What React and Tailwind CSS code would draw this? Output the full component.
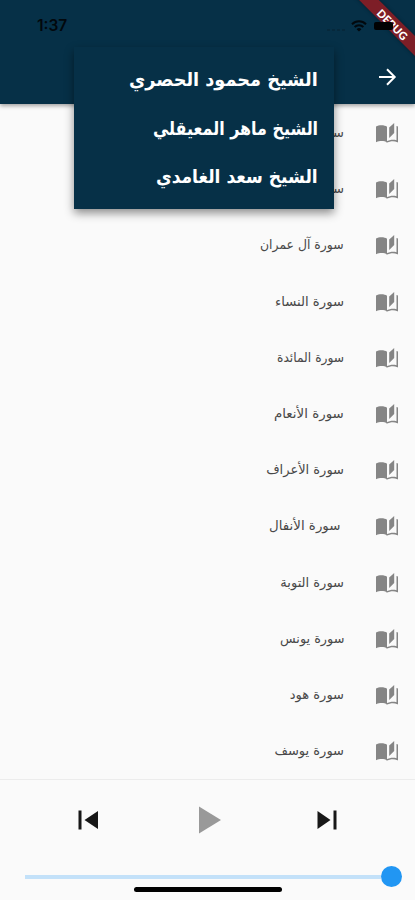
import { useLayoutEffect, useRef, useState } from "react";

const SURAHS = [
  { name: "سورة الفاتحة", width: 72 },
  { name: "سورة البقرة", width: 66 },
  { name: "سورة آل عمران", width: 84 },
  { name: "سورة النساء", width: 69 },
  { name: "سورة المائدة", width: 67 },
  { name: "سورة الأنعام", width: 70 },
  { name: "سورة الأعراف", width: 78 },
  { name: "سورة الأنفال", width: 71, inset: true },
  { name: "سورة التوبة", width: 64 },
  { name: "سورة يونس", width: 64 },
  { name: "سورة هود", width: 54 },
  { name: "سورة يوسف", width: 70 },
];

const RECITERS = [
  { name: "الشيخ محمود الحصري", width: 189 },
  { name: "الشيخ ماهر المعيقلي", width: 165 },
  { name: "الشيخ سعد الغامدي", width: 162 },
];

// Condenses a line of text from its right edge to the requested width.
function FitText({ width, className, children }) {
  const ref = useRef(null);
  const [scale, setScale] = useState(1);
  useLayoutEffect(() => {
    setScale(width / ref.current.offsetWidth);
  }, [width]);
  return (
    <span
      ref={ref}
      className={`inline-block shrink-0 origin-right whitespace-nowrap ${className}`}
      style={{ transform: `scaleX(${scale})` }}
    >
      {children}
    </span>
  );
}

function BookIcon() {
  return (
    <svg viewBox="0 0 24 24" className="mt-[2px] h-6 w-6 shrink-0 fill-[#858585]">
      <path d="M1 4.500C2.500 3.700 4.300 3.200 6.500 3.200s4.300.5 5.500 1.500V20.300c-1.300-.9-3.300-1.300-5.500-1.300-1.700 0-3.700.3-4.900 1.100-.3.200-.6 0-.6-.3Z" />
      <path d="M19.200 1v10l-5 5V5.500Z" />
      <path d="M21.500 4v14.300c-1.100-.35-2.400-.5-3.600-.5-1.700 0-4.800.65-6.300 1.500v1.500c1.500-.85 4.600-1.500 6.300-1.500 1.650 0 3.150.3 4.450 1.050.4.200.65-.1.650-.45V4.600c-.5-.25-1-.4-1.500-.6Z" />
    </svg>
  );
}

function StatusBar() {
  return (
    <div className="absolute inset-x-0 top-0 z-40 flex h-[51px] items-center justify-between pl-[37px] pr-[18px] text-[#02080d]">
      <span className="font-['Inter'] text-[15.500px] font-semibold leading-none">1:37</span>
      <div className="flex items-center">
        <div className="mr-[6px] mt-[8px] flex gap-[2px]">
          <i className="h-[2px] w-[3px] bg-[#06283b]" />
          <i className="h-[2px] w-[3px] bg-[#06283b]" />
          <i className="h-[2px] w-[3px] bg-[#06283b]" />
          <i className="h-[2px] w-[3px] bg-[#06283b]" />
        </div>
        <svg viewBox="0 0 16 12" className="mr-[7px] h-3 w-4" fill="none" stroke="currentColor">
          <path d="M1 4.200a10 10 0 0 1 14 0" strokeWidth="2" />
          <path d="M3.600 7a6.300 6.300 0 0 1 8.800 0" strokeWidth="1.900" />
          <path d="M8 11.600 5.600 9.200a3.500 3.500 0 0 1 4.800 0Z" fill="currentColor" stroke="none" />
        </svg>
        <div className="mr-[4px] h-[8px] w-[19px] rounded-[2px] bg-[#010203]" />
      </div>
    </div>
  );
}

export default function App() {
  return (
    <div className="relative flex h-[900px] w-[415px] flex-col overflow-hidden bg-[#fafafa] font-['DejaVu_Sans',sans-serif]">
      <StatusBar />
      <header className="relative z-10 h-[104px] shrink-0 bg-[#063047] pt-[51px] shadow-[0_2px_4px_rgba(0,0,0,0.35)]">
        <div className="flex h-[52px] items-center justify-end pr-[18px]">
          <svg viewBox="0 0 20 20" className="h-5 w-5" fill="none" stroke="white" strokeWidth="2">
            <path d="M2 10H17M10 2.300 17.700 10 10 17.700" />
          </svg>
        </div>
      </header>

      <ul className="flex h-[675px] shrink-0 flex-col pt-[1px]">
        {SURAHS.map((s) => (
          <li key={s.name} className="flex h-[56.200px] shrink-0 items-center justify-end pr-4">
            <div dir="rtl" className={`flex ${s.inset ? "mr-[35px]" : "mr-[31px]"}`}>
              <FitText width={s.width} className="text-[13px] leading-5 text-[#484848]">
                {s.name}
              </FitText>
            </div>
            <BookIcon />
          </li>
        ))}
      </ul>

      <footer className="flex flex-1 flex-col border-t border-[#ececec] bg-[#fafafa]">
        <div className="flex h-20 items-center justify-between px-[78px]">
          <svg viewBox="0 0 20 20" className="h-5 w-5 fill-[#171717]">
            <path d="M0.500 0.500h3v19h-3ZM20 1v18L6.500 10Z" />
          </svg>
          <svg viewBox="0 0 22 28" className="ml-[5px] h-7 w-[22px] fill-[#999999]">
            <path d="M0 0.500v27L22 14Z" />
          </svg>
          <svg viewBox="0 0 20 20" className="h-5 w-5 fill-[#171717]">
            <path d="M0.500 1v18L13.500 10ZM16.500 0.500h3v19h-3Z" />
          </svg>
        </div>
        <div className="flex h-[33px] items-center pl-[25px] pr-[13px]">
          <div className="h-1 flex-1 bg-[#c3e1f9]" />
          <div className="h-[21px] w-[21px] rounded-full bg-[#2196f3]" />
        </div>
        <div className="ml-[134px] mt-[-6px] h-[5px] w-[148px] shrink-0 rounded-full bg-black" />
      </footer>

      <div
        dir="rtl"
        className="absolute left-[74px] top-[47px] z-20 flex h-[162px] w-[260px] flex-col bg-[#063047] pr-4 pt-[8px] shadow-[0_4px_9px_rgba(0,0,0,0.45)]"
      >
        {RECITERS.map((r) => (
          <div key={r.name} className="flex h-[48.500px] items-center">
            <FitText width={r.width} className="text-[19px] font-bold leading-6 text-white">
              {r.name}
            </FitText>
          </div>
        ))}
      </div>

      <div className="absolute right-[-53px] top-[17px] z-30 flex h-[14px] w-[150px] rotate-45 items-center justify-center bg-[#7d1e27] font-['Lato'] text-[11px] font-black leading-none text-white shadow-[0_0_4px_rgba(0,0,0,0.4)]">
        DEBUG
      </div>
    </div>
  );
}
